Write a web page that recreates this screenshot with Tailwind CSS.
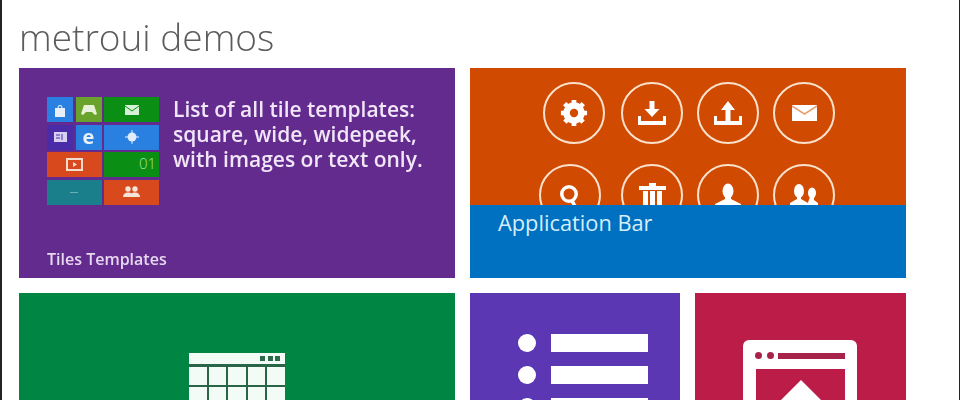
<!DOCTYPE html>
<html lang="en">
  <head>
    <meta charset="UTF-8" />
    <title>metroui demos</title>
    <script src="https://cdn.jsdelivr.net/npm/@tailwindcss/browser@4"></script>
  </head>
  <body class="bg-white overflow-hidden font-['Open_Sans',sans-serif]">
    <div class="w-[960px] h-[400px] overflow-hidden pl-[17px] border-l-2 border-r border-[#222] blur-[0.5px]">
      <h1 class="h-[68px] pt-[13px] text-[37px] leading-[48px] font-light text-[#5c5c5c]">metroui demos</h1>

      <div class="grid grid-cols-[436px_436px] gap-x-[15px] gap-y-[15px]">
        <!-- Tiles templates -->
        <div class="h-[210px] bg-[#632b8e] text-white flex flex-col pl-[28px] pt-[29px]">
          <div class="flex">
            <div class="grid grid-cols-[26px_26px_55px] grid-rows-[25px_25px_25px_25px] gap-x-[2.5px] gap-y-[2.5px] w-[112px] h-[108px] shrink-0">
              <div class="bg-[#2a80e0] flex items-center justify-center"><svg width="12" height="14" viewBox="0 0 12 14"><path fill="#e8eefa" d="M1 5h10v9H1zM3.500 5a2.500 3 0 0 1 5 0H7.500a1.500 2 0 0 0-3 0z"/></svg></div>
              <div class="bg-[#6aa32c] flex items-center justify-center"><svg width="16" height="10" viewBox="0 0 16 10"><path fill="#e8f0d8" d="M3 0h10l3 9-2 1-3-3H5l-3 3-2-1z"/></svg></div>
              <div class="bg-[#0a8f14] flex items-center justify-center"><svg width="14" height="10" viewBox="0 0 14 10"><path fill="#d8f0d8" d="M0 0h14v10H0z"/><path fill="none" stroke="#0a8f14" d="M0 1l7 5 7-5"/></svg></div>
              <div class="bg-[#4a2ca8] flex items-center justify-center"><svg width="13" height="10" viewBox="0 0 13 10"><path fill="#d8d0f0" d="M0 0h13v10H0z"/><path stroke="#4a2ca8" d="M2 3h4M2 6h4M8 2v6"/></svg></div>
              <div class="bg-[#2a80e0] flex items-center justify-center text-[20px] leading-none font-bold text-[#e8f0fa]">e</div>
              <div class="bg-[#2a80e0] flex items-center justify-center"><svg width="14" height="14" viewBox="0 0 14 14"><circle cx="7" cy="7" r="4.500" fill="#e0ecfa"/><path stroke="#e0ecfa" d="M7 0v14M0 7h14"/></svg></div>
              <div class="col-span-2 bg-[#d9491e] flex items-center justify-center"><svg width="17" height="13" viewBox="0 0 17 13"><path fill="none" stroke="#f4dccf" stroke-width="2" d="M1 1h15v11H1z"/><path fill="#f4dccf" d="M7 4l4 2.500-4 2.500z"/></svg></div>
              <div class="bg-[#0a8f14] flex items-start justify-end pr-[3px] pt-[3px] text-[15px] leading-[16px] font-light text-[#a8e0a0]">01</div>
              <div class="col-span-2 bg-[#1a7f8a] flex items-center justify-center"><div class="w-[8px] h-px bg-[#6ab0b4]"></div></div>
              <div class="bg-[#d9491e] flex items-center justify-center"><svg width="17" height="12" viewBox="0 0 17 12"><circle cx="5" cy="3" r="2.700" fill="#f4e4d8"/><circle cx="12" cy="3" r="2.700" fill="#f4e4d8"/><path fill="#f4e4d8" d="M0 11c0-3 2-4.500 5-4.500 1.500 0 2.700 .3 3.500 1 .8-.7 2-1 3.500-1 3 0 5 1.500 5 4.500z"/></svg></div>
            </div>
            <p class="ml-[14px] text-[21px] leading-[25px] font-semibold text-[#f1e6f7] whitespace-nowrap">List of all tile templates:<br />square, wide, widepeek,<br />with images or text only.</p>
          </div>
          <p class="mt-[44px] text-[16px] leading-[20px] font-semibold text-[#e6d8ef]">Tiles Templates</p>
        </div>

        <!-- Application bar -->
        <div class="h-[210px] flex flex-col">
          <div class="h-[137px] bg-[#d04a02] overflow-hidden pt-[14px] text-white">
            <div class="flex pl-[73px] gap-x-[16px]">
              <div class="w-[62px] h-[62px] rounded-full border-[2.5px] border-[#fbe2cc] flex items-center justify-center">
                <svg width="28" height="28" viewBox="0 0 30 30"><circle cx="15" cy="15" r="8" fill="none" stroke="#fff" stroke-width="7"/><path stroke="#fff" stroke-width="5" d="M15 1v28M1 15h28M5 5l20 20M25 5L5 25" stroke-dasharray="5 18 5"/></svg>
              </div>
              <div class="w-[62px] h-[62px] rounded-full border-[2.5px] border-[#fbe2cc] flex items-center justify-center">
                <svg width="28" height="24" viewBox="0 0 28 24"><path fill="#fff" d="M11.500 0h5v8h5L14 16 6.500 8h5zM0 15h3v5h22v-5h3v9H0z"/></svg>
              </div>
              <div class="ml-[-2px] w-[62px] h-[62px] rounded-full border-[2.5px] border-[#fbe2cc] flex items-center justify-center">
                <svg width="28" height="24" viewBox="0 0 28 24"><path fill="#fff" d="M14 0l7 9h-4.500v11h-5V9H7zM0 15h3v5h22v-5h3v9H0z"/></svg>
              </div>
              <div class="ml-[-2px] w-[62px] h-[62px] rounded-full border-[2.5px] border-[#fbe2cc] flex items-center justify-center">
                <svg width="25" height="16" viewBox="0 0 25 16"><path fill="#fff" d="M0 0h25v16H0z"/><path fill="none" stroke="#e8a070" stroke-width="1.500" d="M0 1l12.500 8L25 1"/></svg>
              </div>
            </div>
            <div class="flex pl-[69px] mt-[20px] gap-x-[16px]">
              <div class="w-[62px] h-[62px] rounded-full border-[2.5px] border-[#fbe2cc] flex items-start justify-center pt-[19px]">
                <svg width="20" height="26" viewBox="0 0 20 26"><circle cx="9" cy="9" r="7.250" fill="none" stroke="#fff" stroke-width="3.500"/><path stroke="#fff" stroke-width="3.500" d="M12 16l6 10"/></svg>
              </div>
              <div class="ml-[4px] w-[62px] h-[62px] rounded-full border-[2.5px] border-[#fbe2cc] flex items-start justify-center pt-[17px]">
                <svg width="27" height="24" viewBox="0 0 27 24"><path fill="#fff" d="M0 3h27v4H0zM10 0h7v3h-7zM4 8h5v16H4zM11 8h5v16h-5zM18 8h5v16h-5z"/></svg>
              </div>
              <div class="ml-[-2px] w-[62px] h-[62px] rounded-full border-[2.5px] border-[#fbe2cc] flex items-start justify-center pt-[17px]">
                <svg width="26" height="24" viewBox="0 0 26 24"><ellipse cx="13" cy="8" rx="5.500" ry="7.500" fill="#fff"/><path fill="#fff" d="M10 12h6v4l10 5v3H0v-3l10-5z"/></svg>
              </div>
              <div class="ml-[-2px] w-[62px] h-[62px] rounded-full border-[2.5px] border-[#fbe2cc] flex items-start justify-center pt-[18px]">
                <svg width="28" height="24" viewBox="0 0 28 24"><ellipse cx="22" cy="9" rx="4" ry="5.500" fill="#fff"/><path fill="#fff" d="M20 13h4v3l4 3v5H16z"/><ellipse cx="9" cy="7" rx="5" ry="7" fill="#fff"/><path fill="#fff" d="M7 11h4v4l7 4v5H0v-5l7-4z"/></svg>
              </div>
            </div>
          </div>
          <div class="h-[73px] bg-[#0070c0] pl-[28px] pt-[3px] text-[21.8px] leading-[30px] text-[#d6eefc]">Application Bar</div>
        </div>

        <!-- Calendar -->
        <div class="h-[210px] bg-[#008542] flex justify-center pt-[60px]">
          <div class="w-[96px] self-start bg-[#2a6548]">
            <div class="h-[11px] bg-[#f2fbf6] flex items-center justify-end gap-x-[2.5px] pr-[5px]">
              <div class="w-[5px] h-[5px] bg-[#2c6a4a]"></div>
              <div class="w-[5px] h-[5px] bg-[#2c6a4a]"></div>
              <div class="w-[5px] h-[5px] bg-[#2c6a4a]"></div>
            </div>
            <div class="grid grid-cols-5 gap-[2px] mt-[3px]">
              <div class="h-[18px] bg-[#f2fbf6]"></div><div class="h-[18px] bg-[#f2fbf6]"></div><div class="h-[18px] bg-[#f2fbf6]"></div><div class="h-[18px] bg-[#f2fbf6]"></div><div class="h-[18px] bg-[#f2fbf6]"></div>
              <div class="h-[18px] bg-[#f2fbf6]"></div><div class="h-[18px] bg-[#f2fbf6]"></div><div class="h-[18px] bg-[#f2fbf6]"></div><div class="h-[18px] bg-[#f2fbf6]"></div><div class="h-[18px] bg-[#f2fbf6]"></div>
            </div>
          </div>
        </div>

        <div class="flex gap-x-[15px]">
          <!-- List -->
          <div class="w-[210px] h-[210px] bg-[#5b37b4] pl-[48px] pt-[41px]">
            <div class="flex items-center h-[18px]"><div class="w-[18px] h-[18px] rounded-full bg-white"></div><div class="ml-[15px] w-[97px] h-[18px] bg-white"></div></div>
            <div class="flex items-center h-[18px] mt-[14px]"><div class="w-[18px] h-[18px] rounded-full bg-white"></div><div class="ml-[15px] w-[97px] h-[18px] bg-white"></div></div>
            <div class="flex items-center h-[18px] mt-[14px]"><div class="w-[18px] h-[18px] rounded-full bg-white"></div><div class="ml-[15px] w-[97px] h-[18px] bg-white"></div></div>
          </div>
          <!-- Window -->
          <div class="w-[211px] h-[210px] bg-[#bb1d48] pl-[48px] pt-[47px]">
            <div class="w-[114px] h-[120px] bg-white rounded-[6px] pl-[13px] pr-[12px] pt-[12px]">
              <div class="flex items-center h-[7px] -ml-px">
                <div class="w-[7px] h-[7px] rounded-full bg-[#a8234a]"></div>
                <div class="ml-[5px] w-[7px] h-[7px] rounded-full bg-[#a8234a]"></div>
                <div class="ml-[4px] w-[67px] h-[6px] bg-[#a8234a]"></div>
              </div>
              <div class="mt-[10px] h-[80px] bg-[#bb1d48] flex justify-center pt-[11px]">
                <svg width="60" height="40" viewBox="0 0 60 40"><path fill="#fff" d="M30 0l26 26v14H4V26z"/></svg>
              </div>
            </div>
          </div>
        </div>
      </div>
    </div>
  </body>
</html>
